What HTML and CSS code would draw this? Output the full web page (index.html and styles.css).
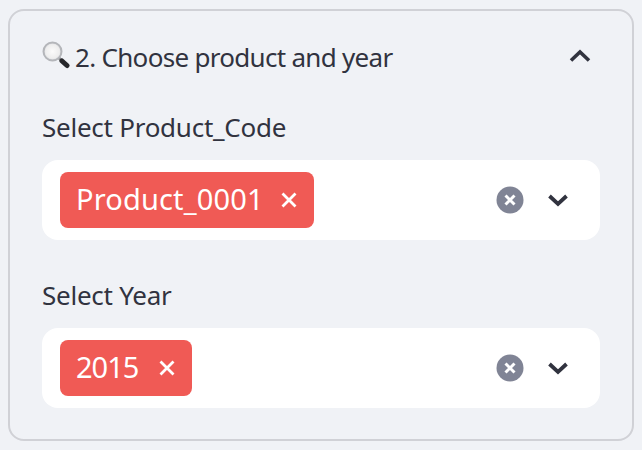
FILE: index.html
```html
<!DOCTYPE html>
<html lang="en">
<head>
<meta charset="utf-8">
<title>Choose product and year</title>
<link rel="stylesheet" href="styles.css">
</head>
<body>
<section class="panel">
  <header class="panel-head">
    <div class="panel-title">
      <svg class="emoji" viewBox="0 0 28 28" width="28" height="28" aria-hidden="true">
        <defs><radialGradient id="glass" cx="0.5" cy="0.5" r="0.5"><stop offset="0" stop-color="#fbfbfb"/><stop offset="0.75" stop-color="#eeeeee"/><stop offset="1" stop-color="#d8dade"/></radialGradient></defs>
        <line x1="17" y1="17" x2="20" y2="20" stroke="#8a8c90" stroke-width="3"/>
        <line x1="20" y1="20" x2="25" y2="24.500" stroke="#26272b" stroke-width="5" stroke-linecap="round"/>
        <circle cx="10.500" cy="10.500" r="9" fill="url(#glass)" stroke="#b4b6ba" stroke-width="2"/>
      </svg>
      <span>2. Choose product and year</span>
    </div>
    <svg class="chevron" viewBox="0 0 24 14" width="24" height="14" aria-hidden="true"><path d="M3 11.500 12 3l9 8.500" fill="none" stroke="#31333f" stroke-width="3.600"/></svg>
  </header>

  <div class="field">
    <label class="field-label">Select Product_Code</label>
    <div class="select">
      <span class="tag"><span class="tag-text">Product_0001</span>
        <svg class="tag-x" viewBox="0 0 16 16" width="16" height="16" aria-hidden="true"><path d="M1.500 1.500l13 13M14.500 1.500l-13 13" stroke="#fff" stroke-width="2.800"/></svg>
      </span>
      <span class="controls">
        <svg class="clear" viewBox="0 0 28 28" width="28" height="28" aria-hidden="true"><circle cx="14" cy="14" r="13.500" fill="#808495"/><path d="M9.500 9.500l9 9M18.500 9.500l-9 9" stroke="#fff" stroke-width="3"/></svg>
        <svg class="open" viewBox="0 0 22 14" width="22" height="14" aria-hidden="true"><path d="M2.500 3 11 11l8.500-8" fill="none" stroke="#31333f" stroke-width="3.800"/></svg>
      </span>
    </div>
  </div>

  <div class="field">
    <label class="field-label">Select Year</label>
    <div class="select">
      <span class="tag tag-num"><span class="tag-text">2015</span>
        <svg class="tag-x" viewBox="0 0 16 16" width="16" height="16" aria-hidden="true"><path d="M1.500 1.500l13 13M14.500 1.500l-13 13" stroke="#fff" stroke-width="2.800"/></svg>
      </span>
      <span class="controls">
        <svg class="clear" viewBox="0 0 28 28" width="28" height="28" aria-hidden="true"><circle cx="14" cy="14" r="13.500" fill="#808495"/><path d="M9.500 9.500l9 9M18.500 9.500l-9 9" stroke="#fff" stroke-width="3"/></svg>
        <svg class="open" viewBox="0 0 22 14" width="22" height="14" aria-hidden="true"><path d="M2.500 3 11 11l8.500-8" fill="none" stroke="#31333f" stroke-width="3.800"/></svg>
      </span>
    </div>
  </div>
</section>
</body>
</html>
```
FILE: styles.css
```css
* { box-sizing: border-box; }
html, body { margin: 0; height: 100%; }
body {
  background: #f0f2f6;
  color: #31333f;
  font-family: "Noto Sans", "Open Sans", sans-serif;
  padding: 9px 8px 0;
  overflow: hidden;
}
.panel {
  width: 626px;
  height: 432px;
  border: 2px solid #d0d1d6;
  border-radius: 16px;
  padding: 0 32px;
}
.panel-head {
  height: 99px;
  padding-top: 29px;
  display: flex;
  justify-content: space-between;
  align-items: flex-start;
}
.panel-title {
  display: flex;
  align-items: center;
  gap: 5px;
  height: 34px;
  font-size: 26px;
  letter-spacing: -0.7px;
  line-height: 34px;
}
.emoji { flex: none; margin-top: -4px; }
.chevron { margin: 9px 8px 0 0; }
.field { margin-bottom: 38px; }
.field-label {
  display: block;
  height: 50px;
  line-height: 34px;
  font-size: 26px;
  letter-spacing: -0.25px;
}
.select {
  height: 80px;
  background: #fff;
  border-radius: 16px;
  padding: 12px 18px;
  display: flex;
  justify-content: space-between;
  align-items: center;
}
.tag {
  height: 56px;
  background: #f05a55;
  color: #fff;
  border-radius: 8px;
  padding: 0 17px 0 16px;
  display: flex;
  align-items: center;
  gap: 17px;
  font-size: 29px;
  letter-spacing: 0.15px;
}
.tag-text { padding-bottom: 3px; }
.tag-num { letter-spacing: -1px; gap: 21px; }
.tag-x { flex: none; }
.controls {
  display: flex;
  align-items: center;
  gap: 23px;
  padding-right: 13.5px;
}
```
